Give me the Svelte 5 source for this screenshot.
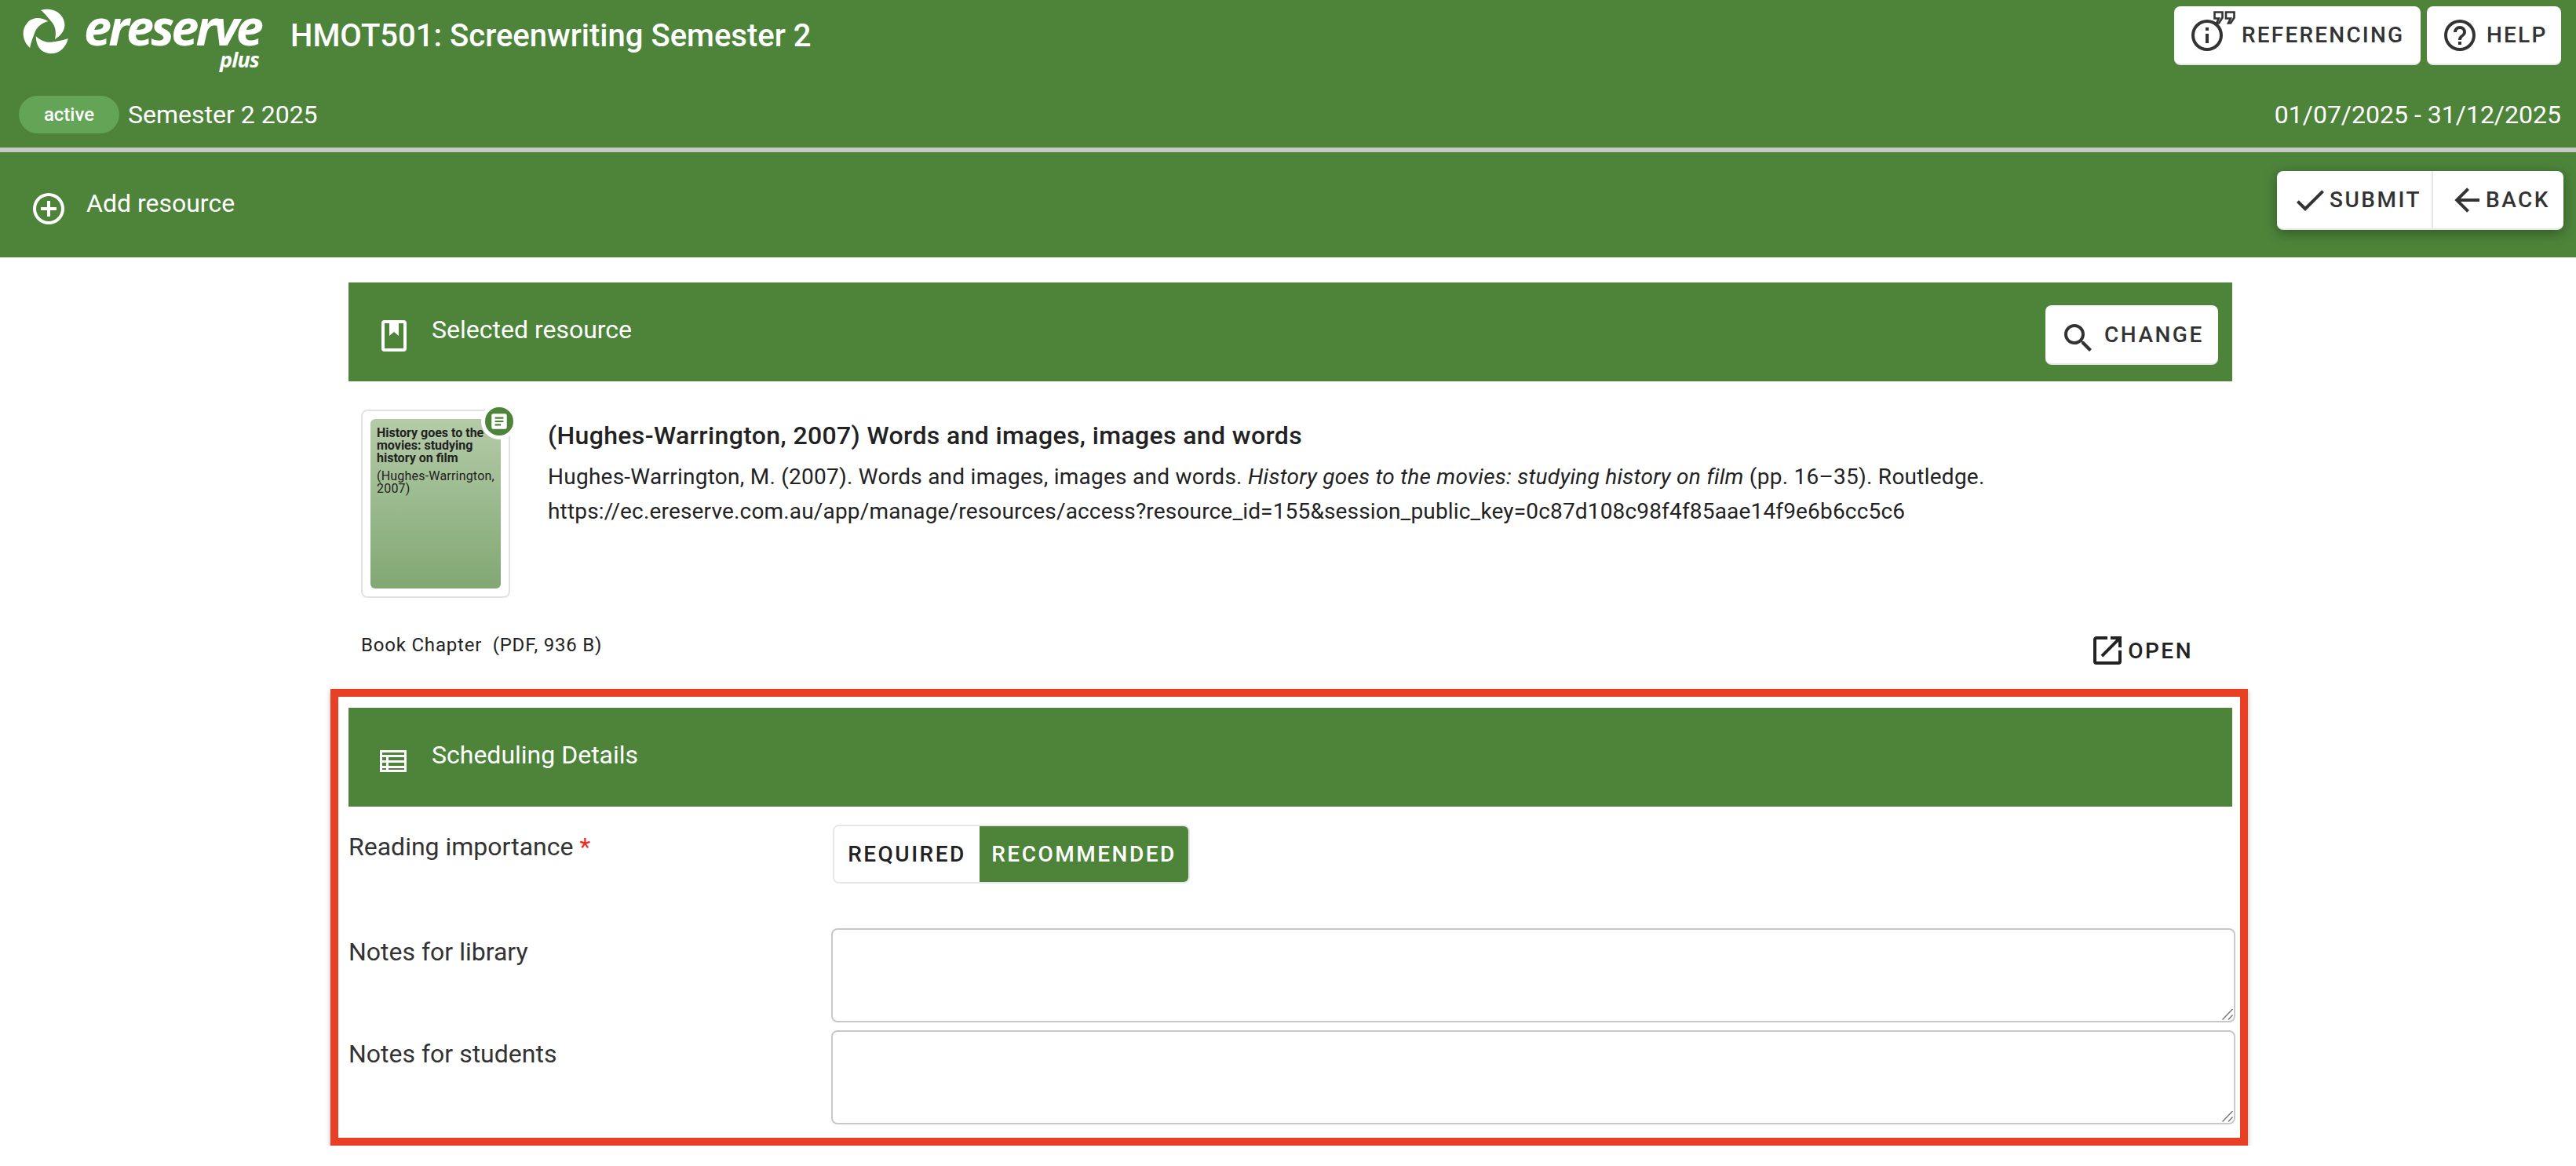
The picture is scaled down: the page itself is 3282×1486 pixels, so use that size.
<script lang="ts">
    const icons = {
        info: 'M11,9H13V7H11M12,20C7.59,20 4,16.41 4,12C4,7.59 7.59,4 12,4C16.41,4 20,7.59 20,12C20,16.41 16.41,20 12,20M12,2A10,10 0 0,0 2,12A10,10 0 0,0 12,22A10,10 0 0,0 22,12A10,10 0 0,0 12,2M11,17H13V11H11V17Z',
        help: 'M11,18H13V16H11V18M12,2A10,10 0 0,0 2,12A10,10 0 0,0 12,22A10,10 0 0,0 22,12A10,10 0 0,0 12,2M12,20C7.59,20 4,16.41 4,12C4,7.59 7.59,4 12,4C16.41,4 20,7.59 20,12C20,16.41 16.41,20 12,20M12,6A4,4 0 0,0 8,10H10A2,2 0 0,1 12,8A2,2 0 0,1 14,10C14,12 11,11.75 11,15H13C13,12.75 16,12.5 16,10A4,4 0 0,0 12,6Z',
        check: 'M21,7L9,19L3.5,13.5L4.91,12.09L9,16.17L19.59,5.59L21,7Z',
        back: 'M20,11V13H8L13.5,18.5L12.08,19.92L4.16,12L12.08,4.08L13.5,5.5L8,11H20Z',
        search: 'M9.5,3A6.5,6.5 0 0,1 16,9.5C16,11.11 15.41,12.59 14.44,13.73L14.71,14H15.5L20.5,19L19,20.5L14,15.5V14.71L13.73,14.44C12.59,15.41 11.11,16 9.5,16A6.5,6.5 0 0,1 3,9.5A6.5,6.5 0 0,1 9.5,3M9.5,5C7,5 5,7 5,9.5C5,12 7,14 9.5,14C12,14 14,12 14,9.5C14,7 12,5 9.5,5Z',
        open: 'M14,3V5H17.59L7.76,14.83L9.17,16.24L19,6.41V10H21V3M19,19H5V5H12V3H5C3.89,3 3,3.9 3,5V19A2,2 0 0,0 5,21H19A2,2 0 0,0 21,19V12H19V19Z',
        plus: 'M12,20C7.59,20 4,16.41 4,12C4,7.59 7.59,4 12,4C16.41,4 20,7.59 20,12C20,16.41 16.41,20 12,20M12,2A10,10 0 0,0 2,12A10,10 0 0,0 12,22A10,10 0 0,0 22,12A10,10 0 0,0 12,2M13,7H11V11H7V13H11V17H13V13H17V11H13V7Z',
        doc: 'M14,17H7V15H14M17,13H7V11H17M17,9H7V7H17M19,3H5C3.89,3 3,3.89 3,5V19A2,2 0 0,0 5,21H19A2,2 0 0,0 21,19V5C21,3.89 20.1,3 19,3Z',
        book: 'M6,2H18A2,2 0 0,1 20,4V20A2,2 0 0,1 18,22H6A2,2 0 0,1 4,20V4A2,2 0 0,1 6,2M6,4V20H18V4H15V12L12,9.5L9,12V4H6Z'
    }

    const swirl = [0, 120, 240]
</script>

<header class="app-bar">
    <div class="title-row">
        <div class="logo">
            <svg class="swirl" viewBox="-30 -30 60 60" aria-hidden="true">
                {#each swirl as angle}
                    <path transform="rotate({angle})" d="M-7,-28 C5,-32 18,-27 22,-16 C26,-6 21,3 11,9 C13,1 12,-8 6,-14 C2,-19 -3,-25 -7,-28Z" />
                {/each}
            </svg>
            <div class="wordmark">
                <span class="word">ereserve</span>
                <span class="plus">plus</span>
            </div>
        </div>
        <h1>HMOT501: Screenwriting Semester 2</h1>
        <div class="top-actions">
            <button class="btn ref-btn">
                <span class="ref-icon">
                    <svg class="i40" viewBox="2 2 20 20"><path d={icons.info} /></svg>
                    <span class="quotes">
                        <svg viewBox="0 0 28 17"><path d="M1.5,1.5H11.5V8.5L7,15.5H4L7,9.5H1.5ZM16,1.5H26.5V8.5L22,15.5H19L22,9.5H16Z" fill="none" stroke="#333" stroke-width="2.6" /></svg>
                    </span>
                </span>
                REFERENCING
            </button>
            <button class="btn help-btn">
                <svg class="i40" viewBox="2 2 20 20"><path d={icons.help} /></svg>
                HELP
            </button>
        </div>
    </div>

    <div class="term-row">
        <span class="chip">active</span>
        <span class="term">Semester 2 2025</span>
        <span class="dates">01/07/2025 - 31/12/2025</span>
    </div>

    <div class="action-row">
        <svg class="add-icon" viewBox="2 2 20 20"><path d={icons.plus} /></svg>
        <span class="add-label">Add resource</span>
        <div class="btn-group">
            <button class="btn flat submit">
                <svg class="i48" viewBox="0 0 24 24"><path d={icons.check} /></svg>
                SUBMIT
            </button>
            <button class="btn flat back">
                <svg class="i48" viewBox="0 0 24 24"><path d={icons.back} /></svg>
                BACK
            </button>
        </div>
    </div>
</header>

<main class="page">
    <section class="band">
        <svg class="band-icon" viewBox="4 2 16 20"><path d={icons.book} /></svg>
        <span class="band-title">Selected resource</span>
        <button class="btn change">
            <svg class="i48 search-icon" viewBox="0 0 24 24"><path d={icons.search} /></svg>
            CHANGE
        </button>
    </section>

    <section class="resource">
        <div class="thumb">
            <div class="cover">
                <strong>History goes to the movies: studying history on film</strong>
                <span>(Hughes-Warrington, 2007)</span>
            </div>
            <span class="badge">
                <svg viewBox="0 0 24 24"><path d={icons.doc} /></svg>
            </span>
        </div>
        <div class="citation">
            <h2>(Hughes-Warrington, 2007) Words and images, images and words</h2>
            <p>Hughes-Warrington, M. (2007). Words and images, images and words. <em>History goes to the movies: studying history on film</em> (pp. 16–35). Routledge.<br /><span class="url">https://ec.ereserve.com.au/app/manage/resources/access?resource_id=155&amp;session_public_key=0c87d108c98f4f85aae14f9e6b6cc5c6</span></p>
        </div>
    </section>

    <div class="meta">
        <span class="kind">Book Chapter &nbsp;(PDF, 936 B)</span>
        <a class="open" href="#open">
            <svg viewBox="3 3 18 18"><path d={icons.open} /></svg>
            OPEN
        </a>
    </div>

    <div class="highlight">
        <section class="band schedule">
            <svg class="table-icon" viewBox="0 0 34 28">
                <path d="M0,0H34V28H0ZM3,3V6H31V3ZM3,9V13H8V9ZM11,9V13H31V9ZM3,16V20H8V16ZM11,16V20H31V16ZM3,23V25H8V23ZM11,23V25H31V23Z" fill-rule="evenodd" />
            </svg>
            <span class="band-title">Scheduling Details</span>
        </section>

        <div class="form">
            <label class="field-label first" for="importance">Reading importance <span class="req">*</span></label>
            <div class="toggle" id="importance">
                <button class="opt">REQUIRED</button>
                <button class="opt on">RECOMMENDED</button>
            </div>

            <label class="field-label" for="library">Notes for library</label>
            <textarea id="library"></textarea>

            <label class="field-label" for="students">Notes for students</label>
            <textarea id="students"></textarea>
        </div>
    </div>
</main>

<style>
    :global(body) {
        background: #fff;
        font-family: Roboto, "Liberation Sans", sans-serif;
        color: #222;
    }

    svg {
        fill: currentColor;
        display: block;
        flex: none;
    }

    button {
        font-family: inherit;
    }

    .app-bar {
        background: #4d843a;
        color: #fff;
    }

    .title-row {
        display: flex;
        align-items: flex-start;
        height: 86px;
        padding: 8px 19px 0 29px;
        box-sizing: border-box;
    }

    .logo {
        display: flex;
        gap: 12px;
        margin-top: 3px;
    }

    .swirl {
        width: 60px;
        height: 60px;
    }

    .wordmark {
        display: flex;
        flex-direction: column;
        align-items: flex-end;
        width: 231px;
        margin-top: -11px;
        font-family: "Open Sans", sans-serif;
        font-style: italic;
        font-weight: 700;
    }

    .word {
        font-size: 63px;
        line-height: 68px;
        letter-spacing: -3.8px;
    }

    .plus {
        font-size: 27px;
        line-height: 16px;
        letter-spacing: -0.8px;
        margin-right: 2px;
    }

    h1 {
        margin: 10px 0 0 38px;
        font-size: 40px;
        line-height: 56px;
        font-weight: 500;
    }

    .top-actions {
        display: flex;
        gap: 8px;
        margin-left: auto;
    }

    .btn {
        display: flex;
        align-items: center;
        height: 75px;
        padding: 0 0 0 22px;
        background: #fff;
        border: 0;
        border-bottom: 2px solid #e6e6e6;
        border-radius: 8px;
        color: #333;
        font-size: 28px;
        font-weight: 500;
        letter-spacing: 2.5px;
    }

    .ref-btn {
        width: 314px;
        gap: 24px;
        letter-spacing: 2.2px;
    }

    .help-btn {
        width: 171px;
        gap: 14px;
        letter-spacing: 2.2px;
    }

    .i40 {
        width: 40px;
        height: 40px;
    }

    .i48 {
        width: 48px;
        height: 48px;
    }

    .ref-icon {
        position: relative;
        display: block;
    }

    .quotes {
        position: absolute;
        left: 28px;
        top: -11px;
        width: 28px;
        height: 17px;
    }

    .term-row {
        display: flex;
        align-items: flex-start;
        height: 102px;
        padding: 36px 19px 0 24px;
        box-sizing: border-box;
        font-size: 32px;
        line-height: 48px;
    }

    .chip {
        width: 128px;
        height: 48px;
        margin-right: 11px;
        border-radius: 24px;
        background: #64a456;
        font-size: 24px;
        font-weight: 500;
        text-align: center;
    }

    .dates {
        margin-left: auto;
    }

    .action-row {
        display: flex;
        align-items: flex-start;
        height: 140px;
        padding: 30px 16px 0 42px;
        box-sizing: border-box;
        border-top: 6px solid #c8c8c8;
    }

    .add-icon {
        width: 40px;
        height: 40px;
        margin-top: 22px;
    }

    .add-label {
        margin: 13px 0 0 28px;
        font-size: 32px;
        line-height: 44px;
    }

    .btn-group {
        display: flex;
        margin-left: auto;
        margin-top: -6px;
        border-radius: 8px;
        box-shadow: 0 4px 16px rgba(0, 0, 0, 0.35);
    }

    .submit {
        width: 199px;
        padding-left: 18px;
        gap: 1px;
        border-radius: 8px 0 0 8px;
        border-right: 2px solid #e6e6e6;
    }

    .back {
        width: 166px;
        padding-left: 19px;
        border-radius: 0 8px 8px 0;
    }

    .page {
        width: 2400px;
        margin: 32px 0 0 444px;
    }

    .band {
        display: flex;
        align-items: flex-start;
        height: 126px;
        background: #4d843a;
        color: #fff;
    }

    .band-icon {
        width: 32px;
        height: 40px;
        margin: 48px 0 0 42px;
    }

    .table-icon {
        width: 34px;
        height: 28px;
        margin: 54px 0 0 40px;
    }

    .band-title {
        margin: 38px 0 0 32px;
        font-size: 32px;
        line-height: 44px;
    }

    .change {
        width: 220px;
        height: 76px;
        margin: 29px 18px 0 auto;
        padding-left: 18px;
        gap: 9px;
    }

    .search-icon {
        margin-top: 10px;
    }

    .resource {
        display: flex;
        gap: 48px;
        padding: 36px 0 0 16px;
    }

    .thumb {
        position: relative;
        width: 190px;
        height: 240px;
        padding: 10px;
        box-sizing: border-box;
        border: 2px solid #e2e2e2;
        border-radius: 8px;
        flex: none;
    }

    .cover {
        height: 216px;
        padding: 10px 2px 0 8px;
        box-sizing: border-box;
        border-radius: 6px;
        background: linear-gradient(#b4cba8, #80a873);
        font-size: 16px;
        line-height: 16px;
        letter-spacing: 0.2px;
    }

    .cover strong {
        display: block;
        margin-bottom: 7px;
        font-weight: 700;
        letter-spacing: 0;
        padding-right: 4px;
    }

    .badge {
        position: absolute;
        top: -10px;
        right: -11px;
        display: flex;
        align-items: center;
        justify-content: center;
        width: 36px;
        height: 36px;
        border: 5px solid #fff;
        border-radius: 50%;
        background: #4d843a;
        color: #fff;
    }

    .badge svg {
        width: 26px;
        height: 26px;
    }

    .citation {
        padding-top: 11px;
    }

    h2 {
        margin: 0;
        font-size: 32px;
        line-height: 44px;
        font-weight: 500;
        letter-spacing: 0.37px;
    }

    .citation p {
        margin: 9px 0 0;
        font-size: 28px;
        line-height: 44px;
        letter-spacing: 0.25px;
    }

    .url {
        letter-spacing: 0.17px;
    }

    .meta {
        display: flex;
        justify-content: space-between;
        align-items: flex-start;
        padding: 42px 50px 0 16px;
    }

    .kind {
        font-size: 24px;
        line-height: 36px;
        letter-spacing: 0.8px;
    }

    .open {
        display: flex;
        align-items: center;
        gap: 8px;
        margin-top: 7px;
        color: #222;
        font-size: 28px;
        font-weight: 500;
        letter-spacing: 2.5px;
        text-decoration: none;
    }

    .open svg {
        width: 36px;
        height: 36px;
    }

    .highlight {
        margin: 31px -20px 0 -23px;
        padding: 14px 10px 17px 13px;
        border: 10px solid #e94025;
        box-shadow: 0 3px 6px rgba(0, 0, 0, 0.3);
    }

    .form {
        display: grid;
        grid-template-columns: 615px 1789px;
        margin-top: 23px;
    }

    .field-label {
        font-size: 32px;
        line-height: 44px;
        padding-top: 8px;
        color: #333;
    }

    .field-label.first {
        padding-top: 6px;
    }

    .req {
        color: #f02a1a;
    }

    .toggle {
        display: flex;
        width: 455px;
        height: 75px;
        margin: 0 0 57px 2px;
        border: 2px solid #e6e6e6;
        border-radius: 8px;
        box-sizing: border-box;
        overflow: hidden;
    }

    .opt {
        width: 185px;
        padding: 0;
        border: 0;
        background: #fff;
        color: #222;
        font-size: 28px;
        font-weight: 500;
        letter-spacing: 2.5px;
    }

    .opt.on {
        flex: 1;
        background: #4d843a;
        color: #fff;
    }

    textarea {
        height: 120px;
        margin-bottom: 10px;
        box-sizing: border-box;
        border: 2px solid #c8c8c8;
        border-radius: 8px;
        background: #fff;
    }

    textarea:last-child {
        margin-bottom: 0;
    }

    textarea::-webkit-resizer {
        background: url("data:image/svg+xml,%3Csvg xmlns='http://www.w3.org/2000/svg' width='15' height='15'%3E%3Cpath d='M0.5 13.5L13.5 0M8 13.5L13.5 7.5' stroke='%23777' stroke-width='1.5' fill='none'/%3E%3C/svg%3E") no-repeat;
    }
</style>
